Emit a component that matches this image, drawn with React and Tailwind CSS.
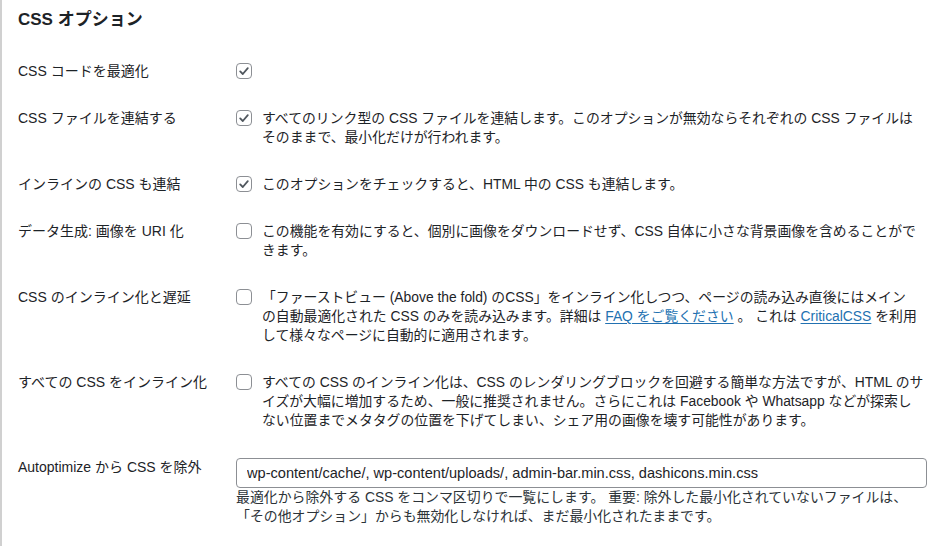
import React from "react";

const FONT = { fontFamily: '"Liberation Sans", "Noto Sans CJK JP", sans-serif' };

function Box({ checked }) {
  return (
    <span className="flex h-[19px] w-[16px] shrink-0 items-center">
      <span className="flex h-[16px] w-[16px] items-center justify-center rounded-[4px] border border-[#8c8f94] bg-white">
        {checked && (
          <svg width="12" height="12" viewBox="0 0 12 12" fill="none">
            <path d="M2.2 6.4 L4.8 9 L9.8 3.2" stroke="#50575e" strokeWidth="1.8" strokeLinecap="round" strokeLinejoin="round" />
          </svg>
        )}
      </span>
    </span>
  );
}

function Row({ label, checked, lines }) {
  return (
    <div className="flex items-start py-[14px]">
      <div className="w-[218px] shrink-0 text-[14px] leading-[19px] text-[#1d2327]">{label}</div>
      <div className="flex items-start gap-[10px]">
        <Box checked={checked} />
        {lines && (
          <div className="whitespace-nowrap text-[13.85px] leading-[19px] text-[#1d2327]">
            {lines.map((l, i) => (
              <div key={i}>{l}</div>
            ))}
          </div>
        )}
      </div>
    </div>
  );
}

const A = ({ children }) => (
  <a href="#" className="text-[#2271b1] underline underline-offset-2">{children}</a>
);

export default function App() {
  return (
    <div style={FONT} className="min-h-screen border-l-2 border-[#d0d0d0] bg-white pl-[16px] pt-[8px]">
      <h2 className="text-[17px] font-bold leading-[23px] text-[#1d2327]">CSS オプション</h2>
      <div className="mt-[16.5px]">
        <Row label="CSS コードを最適化" checked />
        <Row
          label="CSS ファイルを連結する"
          checked
          lines={[
            "すべてのリンク型の CSS ファイルを連結します。このオプションが無効ならそれぞれの CSS ファイルは",
            "そのままで、最小化だけが行われます。",
          ]}
        />
        <Row
          label="インラインの CSS も連結"
          checked
          lines={["このオプションをチェックすると、HTML 中の CSS も連結します。"]}
        />
        <Row
          label="データ生成: 画像を URI 化"
          lines={[
            "この機能を有効にすると、個別に画像をダウンロードせず、CSS 自体に小さな背景画像を含めることがで",
            "きます。",
          ]}
        />
        <Row
          label="CSS のインライン化と遅延"
          lines={[
            "「ファーストビュー (Above the fold) のCSS」をインライン化しつつ、ページの読み込み直後にはメイン",
            <>
              の自動最適化された CSS のみを読み込みます。詳細は <A>FAQ をご覧ください</A> 。 これは <A>CriticalCSS</A> を利用
            </>,
            "して様々なページに自動的に適用されます。",
          ]}
        />
        <Row
          label="すべての CSS をインライン化"
          lines={[
            "すべての CSS のインライン化は、CSS のレンダリングブロックを回避する簡単な方法ですが、HTML のサ",
            "イズが大幅に増加するため、一般に推奨されません。さらにこれは Facebook や Whatsapp などが探索し",
            "ない位置までメタタグの位置を下げてしまい、シェア用の画像を壊す可能性があります。",
          ]}
        />
        <div className="flex items-start py-[14px]">
          <div className="w-[218px] shrink-0 text-[14px] leading-[19px] text-[#1d2327]">Autoptimize から CSS を除外</div>
          <div className="flex flex-col">
            <input
              type="text"
              readOnly
              value="wp-content/cache/, wp-content/uploads/, admin-bar.min.css, dashicons.min.css"
              className="h-[30px] w-[691px] rounded-[4px] border border-[#8c8f94] bg-white px-[10px] text-[14.6px] text-[#1d2327] outline-none"
              style={FONT}
            />
            <div className="whitespace-nowrap text-[13.9px] leading-[19px] text-[#2c3338]">
              <div>最適化から除外する CSS をコンマ区切りで一覧にします。 重要: 除外した最小化されていないファイルは、</div>
              <div>「その他オプション」からも無効化しなければ、まだ最小化されたままです。</div>
            </div>
          </div>
        </div>
      </div>
    </div>
  );
}
